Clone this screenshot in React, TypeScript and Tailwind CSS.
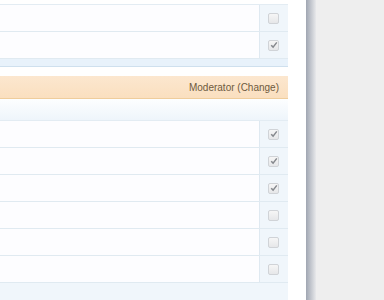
const topRows = [false, true];
const bottomRows = [true, true, true, false, false, false];

export default function App() {
  return (
    <div className="flex h-[300px] w-[384px] overflow-hidden bg-[#eeeeee]">
      <div className="w-[306px] shrink-0 bg-white pr-[18px]">
        <div className="pt-[4px]">
          <div className="border-t border-[#e3ecf3]">
            {topRows.map((checked, i) => (
              <Row key={i} checked={checked} />
            ))}
          </div>
          <div className="h-[8px] border-b border-[#cfe0ee] bg-[#e8f2fb]" />
        </div>

        <div className="mt-[9px] flex h-[23px] items-center justify-end border-b border-[#efcd9c] bg-gradient-to-b from-[#fce7cf] to-[#fadfbf] pr-[9px]">
          <span className="font-['Liberation_Sans',sans-serif] text-[10px] text-[#6e5a3e]">
            Moderator (Change)
          </span>
        </div>

        <div className="h-[21px] bg-gradient-to-b from-[#fdfeff] to-[#eef5fb]" />
        <div className="border-t border-[#e3ecf3]">
          {bottomRows.map((checked, i) => (
            <Row key={i} checked={checked} />
          ))}
        </div>
        <div className="h-[20px] bg-[#f0f6fb]" />
      </div>
      <div className="w-[10px] shrink-0 bg-gradient-to-r from-[#a0a6b2] to-[#e8e9eb]" />
    </div>
  );
}

function Row({ checked }: { checked: boolean }) {
  return (
    <div className="flex h-[27px] border-b border-[#e0eaf1]">
      <div className="flex-1 bg-[#fdfdff]" />
      <div className="flex w-[29px] items-center justify-center border-l border-[#dfe9f1] bg-[#f0f6fb] pr-[1px]">
        <Checkbox checked={checked} />
      </div>
    </div>
  );
}

function Checkbox({ checked }: { checked: boolean }) {
  return (
    <div className="flex h-[11px] w-[11px] items-center justify-center rounded-[2px] border border-[#d0d3d7] bg-gradient-to-b from-[#f6f6f6] to-[#e6e7e9]">
      {checked && (
        <svg width="8" height="8" viewBox="0 0 8 8">
          <path d="M1.2 4.2 L3.1 6.1 L6.8 1.4" fill="none" stroke="#85888d" strokeWidth="1.5" />
        </svg>
      )}
    </div>
  );
}
